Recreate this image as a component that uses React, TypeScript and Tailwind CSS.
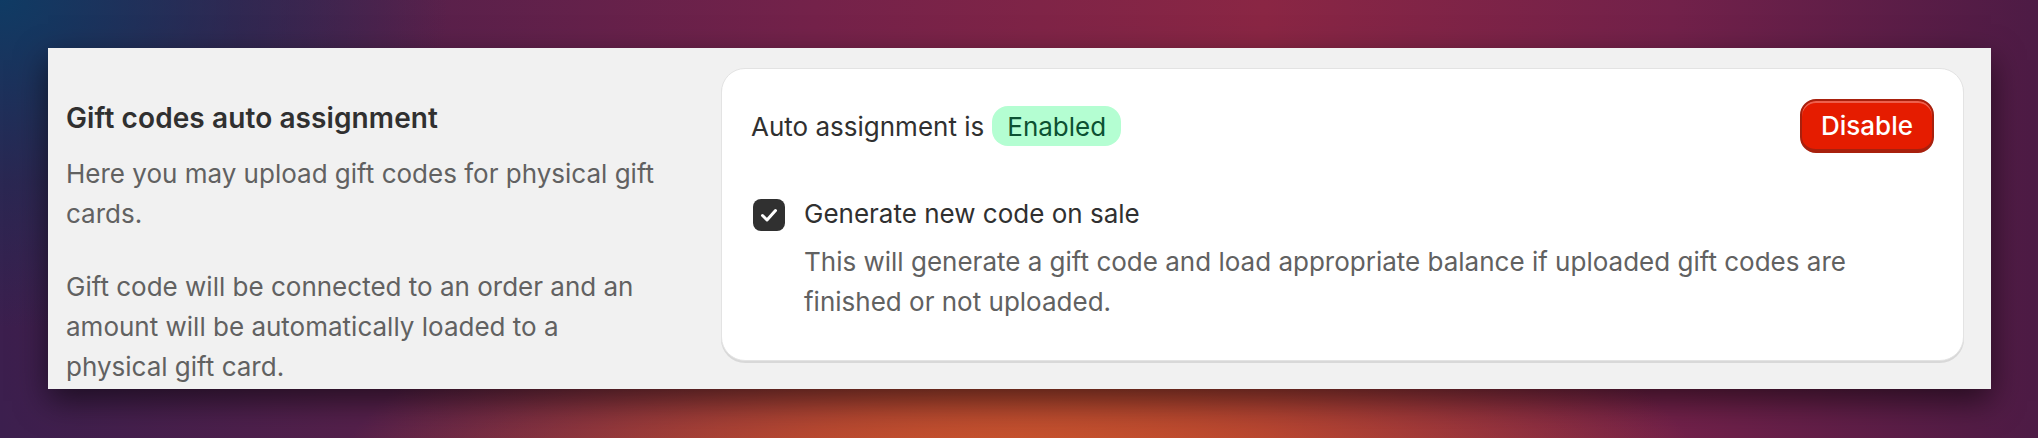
import { useState } from 'react';

export default function App() {
  const [generate, setGenerate] = useState(true);

  return (
    <div
      className="h-[438px] w-full overflow-hidden pt-[48px] pl-[48px] pr-[47px] bg-[radial-gradient(ellipse_34%_60%_at_50%_115%,#d9602a_0%,rgba(205,85,40,0.75)_40%,rgba(160,50,50,0)_100%),radial-gradient(ellipse_22%_75%_at_0%_0%,#0f3b64_0%,rgba(30,45,85,0.6)_55%,rgba(40,30,70,0)_100%),linear-gradient(to_right,#3c1f4e_0%,#55204b_18%,#74224a_40%,#8a2644_62%,#72214a_82%,#4d1b45_100%)]"
      style={{ fontFamily: 'Inter, "Liberation Sans", sans-serif' }}
    >
      <section className="flex h-[341px] overflow-hidden bg-[#f1f1f1] pl-[18px] pr-[27px] pt-[20px] shadow-[0_12px_30px_rgba(0,0,0,0.55)]">
        <div className="w-[617px] shrink-0 pt-[30px]">
          <h2 className="text-[28px] leading-[40px] font-semibold text-[#303030] tracking-[0.1px]">
            Gift codes auto assignment
          </h2>
          <p className="mt-[16px] max-w-[596px] text-[26px] leading-[40px] text-[#616161]">
            Here you may upload gift codes for physical gift cards.
          </p>
          <p className="mt-[33px] max-w-[596px] text-[26px] leading-[40px] text-[#616161]">
            Gift code will be connected to an order and an amount will be automatically loaded to a
            physical gift card.
          </p>
        </div>

        <div className="ml-[38px] h-[293px] flex-1 rounded-[24px] border border-[#e3e3e3] bg-white px-[29px] pt-[30px] shadow-[0_2px_0_0_rgba(0,0,0,0.1)]">
          <div className="flex h-[54px] items-center justify-between">
            <div className="flex items-center gap-[8px] text-[26px] text-[#303030]">
              <span>Auto assignment is</span>
              <span className="flex h-[40px] items-center rounded-[16px] bg-[#b4fed2] px-[15px] text-[#0c5132]">
                Enabled
              </span>
            </div>
            <button className="h-[54px] w-[134px] rounded-[16px] border-2 border-b-4 border-[#a8200d] bg-[#e51c00] text-[26px] font-medium text-white shadow-[inset_0_2px_0_0_rgba(255,255,255,0.3)]">
              Disable
            </button>
          </div>

          <div className="mt-[41px] flex gap-[19px]">
            <button
              onClick={() => setGenerate(!generate)}
              className="mt-[5px] ml-[2px] flex h-[32px] w-[32px] shrink-0 items-center justify-center rounded-[8px] bg-[#303030]"
            >
              {generate && (
                <svg width="32" height="32" viewBox="0 0 32 32" fill="none">
                  <path d="M9.5 16.5l4.5 4.5 8.5-9.5" stroke="white" strokeWidth="3" strokeLinecap="round" strokeLinejoin="round" />
                </svg>
              )}
            </button>
            <div>
              <div className="text-[26px] leading-[40px] text-[#303030]">Generate new code on sale</div>
              <p className="mt-[8px] max-w-[1085px] text-[26px] leading-[40px] text-[#616161]">
                This will generate a gift code and load appropriate balance if uploaded gift codes are finished or not uploaded.
              </p>
            </div>
          </div>
        </div>
      </section>
    </div>
  );
}
